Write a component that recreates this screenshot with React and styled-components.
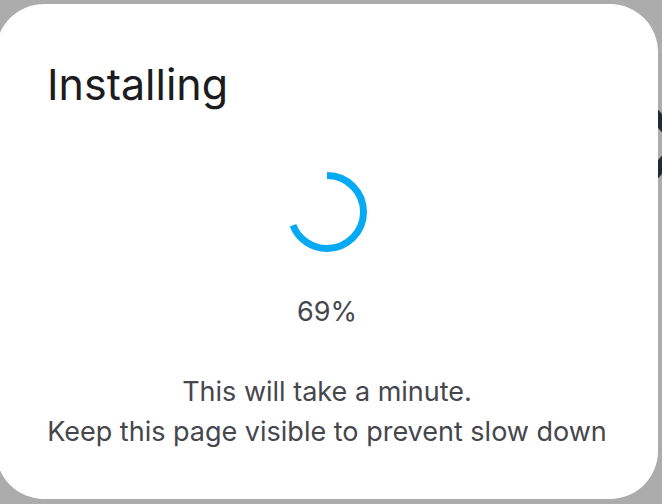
import React from 'react';
import styled, { createGlobalStyle } from 'styled-components';

const GlobalStyle = createGlobalStyle`
  html, body {
    margin: 0;
    padding: 0;
    background: #acacac;
    overflow: hidden;
  }
  body {
    font-family: Inter, "Liberation Sans", sans-serif;
  }
`;

const Page = styled.div`
  position: relative;
  width: 662px;
  height: 504px;
  padding-top: 4px;
  box-sizing: border-box;
  overflow: hidden;
`;

const Backdrop = styled.svg`
  position: absolute;
  left: 640px;
  top: 100px;
`;

const Card = styled.div`
  position: relative;
  margin-left: -4px;
  width: 662px;
  height: 495px;
  box-sizing: border-box;
  padding: 54px 0 0 51px;
  background: #ffffff;
  border-radius: 48px;
  display: flex;
  flex-direction: column;
`;

const Title = styled.h1`
  margin: 0;
  font-size: 43px;
  line-height: 52px;
  font-weight: 400;
  color: #1c1c1e;
`;

const Body = styled.div`
  margin-left: -51px;
  display: flex;
  flex-direction: column;
  align-items: center;
  padding-top: 62px;
`;

const Spinner = styled.svg`
  display: block;
`;

const Percent = styled.div`
  margin-top: 44px;
  font-size: 27px;
  line-height: 32px;
  color: #46464d;
`;

const Message = styled.p`
  margin: 44px 0 0;
  font-size: 27px;
  line-height: 40px;
  text-align: center;
  color: #46464d;
`;

const ProgressRing = ({ value, size = 80, stroke = 7 }) => {
  const r = (size - stroke) / 2;
  const c = 2 * Math.PI * r;
  return (
    <Spinner width={size} height={size} viewBox={`0 0 ${size} ${size}`}>
      <circle
        cx={size / 2}
        cy={size / 2}
        r={r}
        fill="none"
        stroke="#05a9f4"
        strokeWidth={stroke}
        strokeDasharray={`${(c * value) / 100} ${c}`}
        transform={`rotate(-90 ${size / 2} ${size / 2})`}
      />
    </Spinner>
  );
};

const App = () => {
  const progress = 69;
  return (
    <Page>
      <GlobalStyle />
      <Backdrop width="60" height="100" viewBox="0 0 60 100">
        <polyline points="14,14 40,44 14,74" fill="none" stroke="#1f2b3b" strokeWidth="12" />
      </Backdrop>
      <Card>
        <Title>Installing</Title>
        <Body>
          <ProgressRing value={progress} />
          <Percent>{progress}%</Percent>
          <Message>
            This will take a minute.
            <br />
            Keep this page visible to prevent slow down
          </Message>
        </Body>
      </Card>
    </Page>
  );
};

export default App;
